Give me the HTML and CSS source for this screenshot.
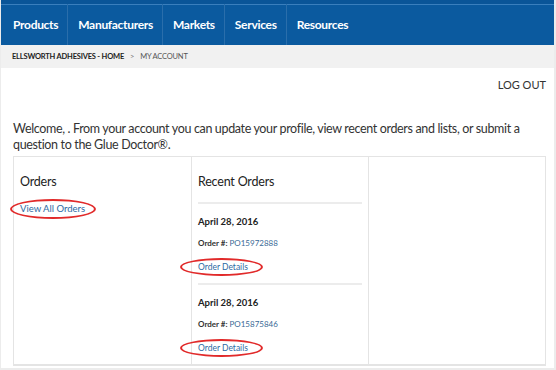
FILE: index.html
```html
<!DOCTYPE html>
<html lang="en">
<head>
<meta charset="utf-8">
<title>My Account</title>
<link rel="stylesheet" href="styles.css">
</head>
<body>
<div class="page">
  <nav class="nav">
    <a class="nav-item first" href="#">Products</a>
    <a class="nav-item" href="#">Manufacturers</a>
    <a class="nav-item" href="#">Markets</a>
    <a class="nav-item" href="#">Services</a>
    <a class="nav-item last" href="#">Resources</a>
  </nav>
  <div class="crumbs">
    <a class="crumb-home" href="#">ELLSWORTH ADHESIVES - HOME</a>
    <span class="crumb-sep">&gt;</span>
    <span class="crumb-current">MY ACCOUNT</span>
  </div>
  <main class="main">
    <div class="logout-row"><a class="logout" href="#">LOG OUT</a></div>
    <p class="welcome">Welcome, . From your account you can update your profile, view recent orders and lists, or submit a question to the Glue Doctor®.</p>
    <div class="panels">
      <section class="panel panel-first">
        <h2 class="panel-title">Orders</h2>
        <div class="link-row"><a class="link" href="#">View All Orders<span class="ring ring-wide"></span></a></div>
      </section>
      <section class="panel">
        <h2 class="panel-title">Recent Orders</h2>
        <div class="order">
          <div class="order-date">April 28, 2016</div>
          <div class="order-num">Order #: <span class="po">PO15972888</span></div>
          <div class="order-link"><a class="link" href="#">Order Details<span class="ring"></span></a></div>
        </div>
        <div class="order">
          <div class="order-date">April 28, 2016</div>
          <div class="order-num">Order #: <span class="po">PO15875846</span></div>
          <div class="order-link"><a class="link" href="#">Order Details<span class="ring"></span></a></div>
        </div>
      </section>
      <section class="panel panel-last"></section>
    </div>
  </main>
</div>
</body>
</html>
```

FILE: styles.css
```css
* { box-sizing: border-box; }
html, body { margin: 0; padding: 0; background: #fff; }
body { font-family: Lato, "Open Sans", Arial, sans-serif; color: #333; }
a { text-decoration: none; }

.page {
  width: 556px;
  height: 370px;
  border-left: 1px solid #ececec;
  border-right: 2px solid #ececec;
  border-bottom: 2px solid #ececec;
  overflow: hidden;
}

.nav {
  height: 45px;
  display: flex;
  align-items: stretch;
  background: #0b5a9f;
  border-top: 4px solid #0a5598;
  box-shadow: inset 0 1px 0 #3a7fbd;
  margin: 0 -2px 0 -1px;
}
.nav-item {
  display: flex;
  align-items: center;
  padding: 0 9px 0 10px;
  color: #fff;
  font-size: 12px;
  letter-spacing: -0.3px;
  font-weight: 700;
  border-right: 1px solid #2a6eab;
}
.nav-item.first { padding-left: 13px; padding-right: 9px; }
.nav-item.last { border-right: none; }

.crumbs {
  height: 23px;
  display: flex;
  align-items: center;
  gap: 6px;
  padding-left: 12px;
  background: #f1f1f1;
  font-size: 7.5px;
  letter-spacing: -0.2px;
  margin: 0 -2px 0 -1px;
}
.crumb-home { color: #222; font-weight: 700; }
.crumb-sep { color: #777; }
.crumb-current { color: #555; }

.main { padding: 0 8px 0 12px; }

.logout-row {
  display: flex;
  justify-content: flex-end;
  padding-top: 10px;
  height: 34px;
}
.logout { color: #333; font-size: 11px; line-height: 14px; }

.welcome {
  margin: 19px 0 0;
  font-size: 12.5px;
  letter-spacing: -0.35px;
  line-height: 16px;
  color: #333;
}

.panels {
  margin-top: 3px;
  display: grid;
  grid-template-columns: 178px 177px 1fr;
  border: 1px solid #e4e4e4;
  border-bottom-width: 2px;
}
.panel {
  padding: 0 6px 10px;
  border-right: 1px solid #e4e4e4;
}
.panel-last { border-right: none; }

.panel-title {
  margin: 17px 0 0;
  font-size: 12.5px;
  letter-spacing: -0.2px;
  line-height: 16px;
  font-weight: 400;
  color: #222;
}

.link-row {
  margin-top: 12px;
  font-size: 9.5px;
  line-height: 14px;
}
.link { color: #2c6aa4; position: relative; }

.order {
  margin-top: 12px;
  border-top: 2px solid #ececec;
  padding-top: 11px;
}
.order + .order { margin-top: 10px; }
.order-date {
  font-size: 9.5px;
  line-height: 14px;
  font-weight: 700;
  color: #222;
}
.order-num {
  margin-top: 8px;
  font-size: 8px;
  line-height: 12px;
  font-weight: 700;
  color: #333;
}
.po { font-weight: 400; color: #3a6a96; }
.order-link {
  margin-top: 12px;
  font-size: 8.5px;
  line-height: 12px;
}

.ring {
  position: absolute;
  left: -18px;
  top: 50%;
  transform: translateY(-50%);
  width: 83px;
  height: 18px;
  border: 2px solid #e12a2a;
  border-radius: 50%;
  pointer-events: none;
}
.ring-wide {
  left: -10px;
  width: 86px;
  height: 20px;
}
```
